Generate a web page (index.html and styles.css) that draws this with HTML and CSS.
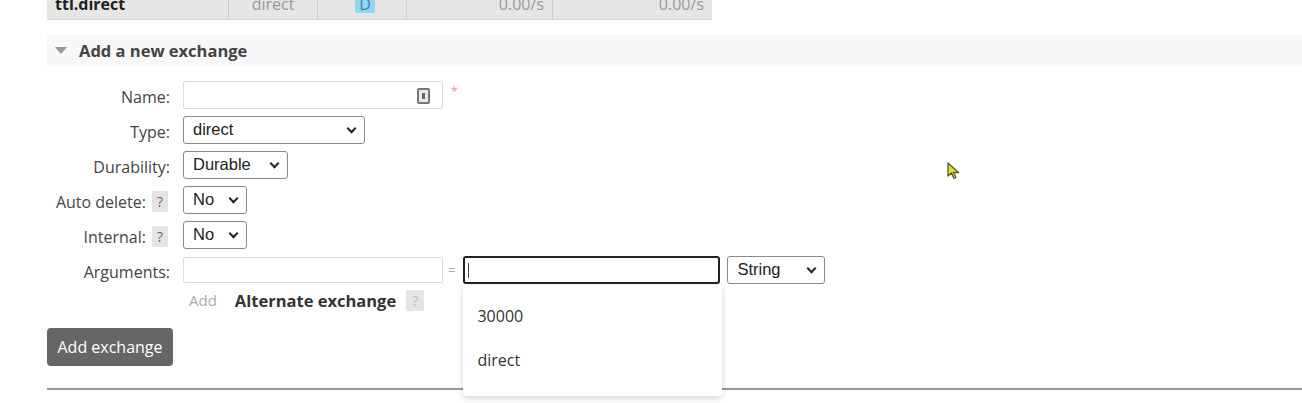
FILE: index.html
```html
<!DOCTYPE html>
<html>
<head>
<meta charset="utf-8">
<link rel="stylesheet" href="styles.css">
</head>
<body>
<div class="page">
  <div class="table-row">
    <div class="cell c-name">ttl.direct</div>
    <div class="cell c-type">direct</div>
    <div class="cell c-feat"><span class="badge">D</span></div>
    <div class="cell c-rate1">0.00/s</div>
    <div class="cell c-rate2">0.00/s</div>
  </div>

  <div class="section-head"><span class="tri"></span>Add a new exchange</div>

  <div class="form">
    <div class="label">Name:</div>
    <div class="field">
      <div class="input name-input"><span class="kb-icon"></span></div>
      <span class="req">*</span>
    </div>

    <div class="label">Type:</div>
    <div class="field"><div class="select w-type"><span>direct</span><span class="chev"></span></div></div>

    <div class="label">Durability:</div>
    <div class="field"><div class="select w-dur"><span>Durable</span><span class="chev"></span></div></div>

    <div class="label">Auto delete: <span class="help">?</span></div>
    <div class="field"><div class="select w-no"><span>No</span><span class="chev"></span></div></div>

    <div class="label">Internal: <span class="help">?</span></div>
    <div class="field"><div class="select w-no"><span>No</span><span class="chev"></span></div></div>

    <div class="label">Arguments:</div>
    <div class="field args">
      <div class="input arg-key"></div>
      <span class="eq">=</span>
      <div class="input arg-val focused"><span class="caret"></span>
        <div class="suggest">
          <div class="opt">30000</div>
          <div class="opt">direct</div>
        </div>
      </div>
      <div class="select w-str"><span>String</span><span class="chev"></span></div>
    </div>

    <div class="label sub-label"></div>
    <div class="field sub">
      <span class="add-link">Add</span>
      <span class="alt">Alternate exchange</span>
      <span class="help big">?</span>
    </div>
  </div>

  <button class="btn">Add exchange</button>
  <div class="rule"></div>

  <svg class="cursor" width="14" height="18" viewBox="0 0 14 18"><path d="M1 1 L1 14 L4.5 11 L7 16.5 L9 15.5 L6.5 10.5 L11.5 10.5 Z" fill="#d8e033" stroke="#5a5a2a" stroke-width="1.3" stroke-linejoin="round"/></svg>
</div>
</body>
</html>
```

FILE: styles.css
```css
* { box-sizing: border-box; }
html, body { margin: 0; padding: 0; background: #fff; }
body {
  font-family: "Open Sans", "DejaVu Sans", sans-serif;
  font-size: 16px;
  color: #484848;
  width: 1302px;
  height: 403px;
  overflow: hidden;
}
.page { position: relative; padding-left: 47px; }

.table-row {
  display: flex;
  width: 665px;
  height: 20px;
  background: #e6e6e6;
  border-bottom: 1px solid #d4d4d4;
  line-height: 8px;
  font-size: 16px;
}
.cell {
  border-right: 1px solid #cfcfcf;
  padding: 0 8px;
  color: #999;
  overflow: hidden;
}
.c-name { width: 182px; font-weight: bold; color: #222; }
.c-type { width: 89px; text-align: center; }
.c-feat { width: 89px; text-align: center; }
.c-rate1 { width: 146px; text-align: right; }
.c-rate2 { width: 159px; text-align: right; border-right: none; }
.badge {
  display: inline-block;
  background: #92d6f7;
  color: #4a7fa0;
  padding: 0 4px;
  height: 13px;
  border-radius: 2px;
  margin-left: 6px;
}

.section-head {
  margin-top: 15px;
  height: 31px;
  background: #f8f8f8;
  display: flex;
  align-items: center;
  font-weight: bold;
  font-size: 16.5px;
  color: #444;
  padding-left: 8px;
}
.tri {
  width: 0; height: 0;
  border-left: 6px solid transparent;
  border-right: 6px solid transparent;
  border-top: 7px solid #999;
  margin-right: 12px;
}

.form {
  display: grid;
  grid-template-columns: 123px 1fr;
  column-gap: 13px;
  row-gap: 7px;
  margin-top: 15px;
  align-items: center;
}
.label {
  text-align: right;
  height: 28px;
  line-height: 28px;
  color: #444;
  white-space: nowrap;
  display: flex;
  justify-content: flex-end;
  align-items: center;
  gap: 6px;
  font-size: 16px;
  padding-top: 3px;
}
.field { display: flex; align-items: center; height: 28px; }
.input {
  height: 28px;
  border: 1px solid #dcdcdc;
  background: #fff;
  border-radius: 2px;
  position: relative;
}
.name-input { width: 260px; }
.kb-icon {
  position: absolute;
  right: 12px; top: 6px;
  width: 13px; height: 16px;
  border: 2px solid #777;
  border-radius: 2px;
  background: #e8e8e8;
}
.kb-icon::after {
  content: "";
  position: absolute;
  left: 3px; top: 3px;
  width: 3px; height: 6px;
  background: #666;
}
.req { color: #f08aa0; margin-left: 8px; align-self: flex-start; font-size: 12px; margin-top: 2px; }

.select {
  height: 28px;
  border: 1px solid #8a8a8a;
  border-radius: 3px;
  background: #fff;
  display: flex;
  align-items: center;
  justify-content: space-between;
  padding: 0 9px 2px 9px;
  color: #222;
  font-family: "Liberation Sans", Arial, sans-serif;
  font-size: 16.5px;
}
.chev {
  width: 7px; height: 7px;
  border-right: 2px solid #222;
  border-bottom: 2px solid #222;
  transform: rotate(45deg);
  margin-top: -1px;
}
.w-type { width: 182px; }
.w-dur { width: 105px; }
.w-no { width: 64px; }
.w-str { width: 98px; margin-left: 7px; }

.help {
  display: inline-block;
  width: 16px;
  height: 21px;
  line-height: 21px;
  background: #e4e4e4;
  color: #666;
  font-size: 14px;
  text-align: center;
  margin-right: 2px;
}
.help.big { width: 18px; height: 21px; line-height: 21px; color: #bbb; margin-left: 10px; }

.args { height: 28px; }
.arg-key { width: 260px; height: 26px; }
.eq { color: #aaa; margin: 0 8px 0 5px; font-size: 13px; }
.arg-val { width: 257px; height: 28px; }
.arg-val.focused {
  border: 2px solid #222;
  border-radius: 3px;
}
.caret {
  position: absolute;
  left: 3px; top: 5px;
  width: 1px; height: 15px;
  background: #444;
}
.suggest {
  position: absolute;
  left: -2px;
  top: 27px;
  width: 259px;
  height: 111px;
  background: #fff;
  border-radius: 0 0 4px 4px;
  box-shadow: 0 2px 6px rgba(0,0,0,0.18);
  padding-top: 21px;
  z-index: 5;
}
.opt {
  height: 44px;
  padding-left: 14px;
  color: #333;
  font-size: 16px;
  line-height: 20px;
}

.sub-label, .sub { height: 22px; margin-top: -2px; }
.add-link { color: #aaa; margin-left: 6px; font-size: 15px; }
.alt { font-weight: bold; color: #333; margin-left: 18px; font-size: 16.5px; }

.btn {
  display: block;
  margin-top: 17px;
  width: 126px;
  height: 38px;
  background: #666;
  color: #fff;
  border: none;
  border-radius: 4px;
  font-family: "Open Sans", "DejaVu Sans", sans-serif;
  font-size: 16px;
  padding: 0;
}
.rule {
  margin-top: 22px;
  height: 2px;
  background: #9a9a9a;
}
.cursor { position: absolute; left: 947px; top: 162px; }
```
